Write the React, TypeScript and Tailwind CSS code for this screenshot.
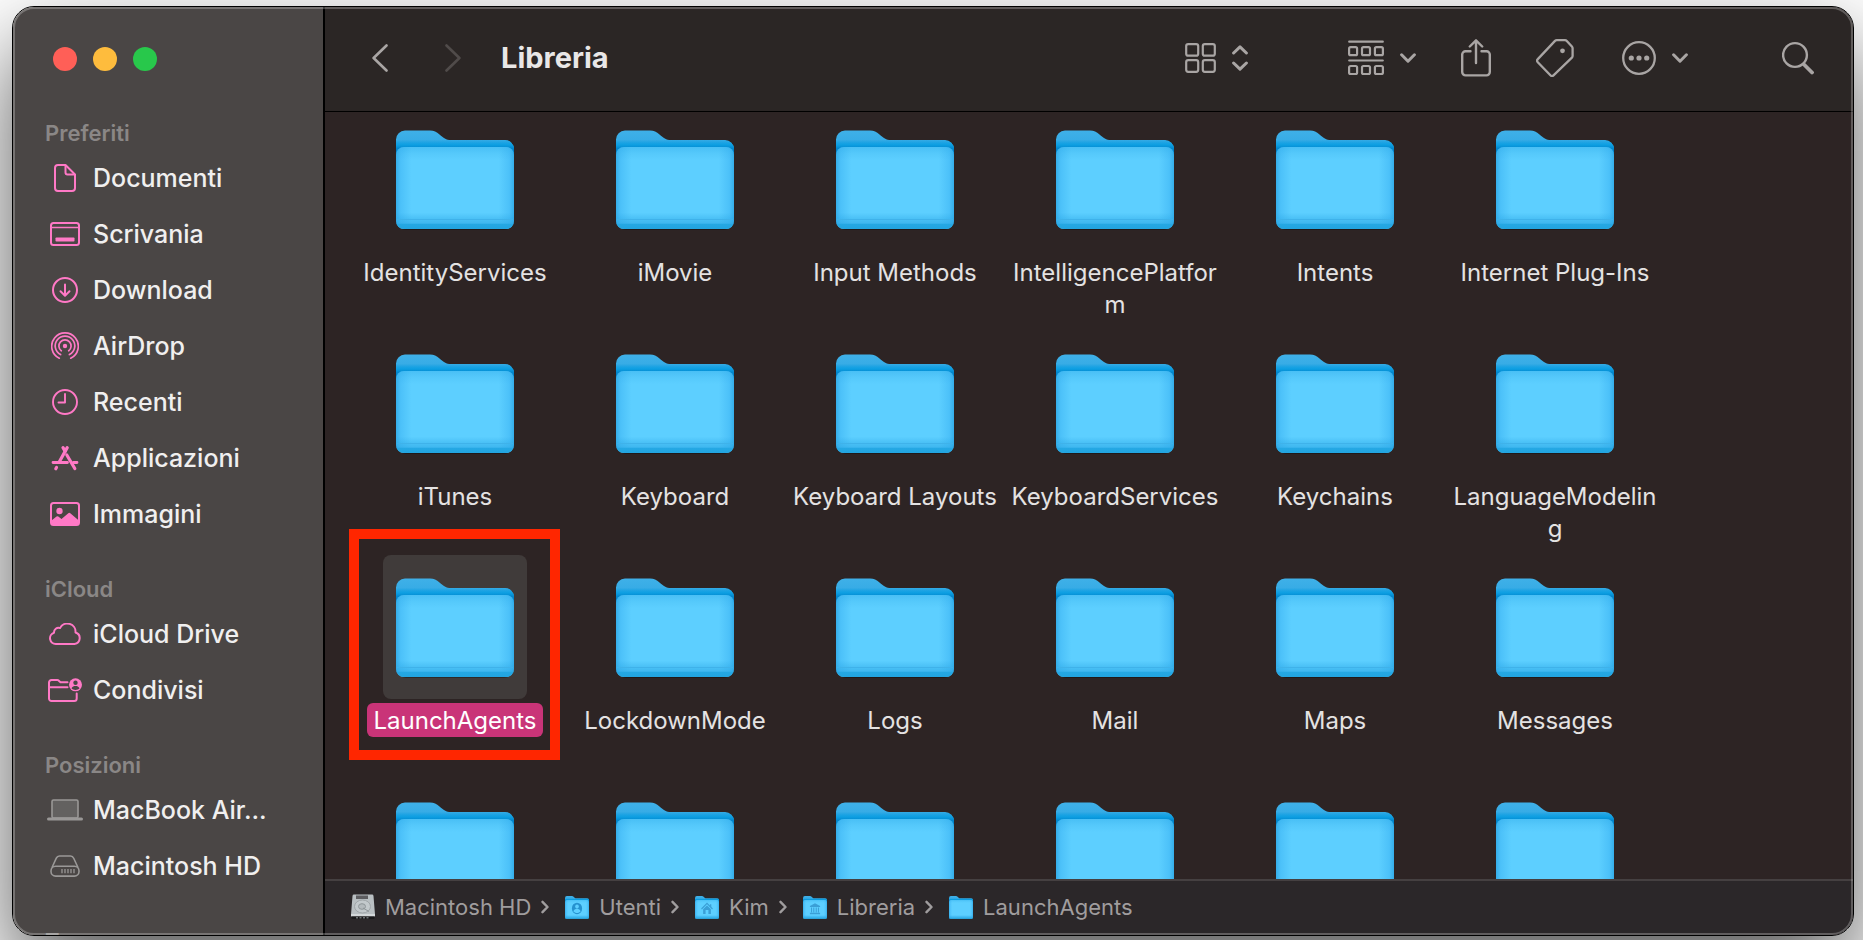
import React, { useState } from 'react';

interface FolderArtProps {
    className?: string;
    children?: React.ReactNode;
}

interface SidebarEntry {
    label: string;
    icon: React.ReactNode;
}

interface SidebarGroup {
    title: string;
    entries: SidebarEntry[];
}

/* ---------- Sidebar icons ---------- */

const DocumentIcon = () => (
    <svg width="22" height="28" viewBox="0 0 22 28" fill="none" stroke="currentColor" strokeWidth="2" strokeLinejoin="round">
        <path d="M4 1h7.5L21 10.5V24a3 3 0 0 1-3 3H4a3 3 0 0 1-3-3V4a3 3 0 0 1 3-3Z" />
        <path d="M11.5 1v7.5a2 2 0 0 0 2 2H21" />
    </svg>
);

const DesktopIcon = () => (
    <svg width="30" height="24" viewBox="0 0 30 24" fill="none" stroke="currentColor" strokeWidth="2">
        <rect x="1" y="1" width="28" height="22" rx="2.5" />
        <path d="M1 5.500h28" strokeWidth="1.6" />
        <rect x="5.500" y="15.500" width="19" height="4" rx="0.8" fill="currentColor" stroke="none" />
    </svg>
);

const DownloadIcon = () => (
    <svg width="26" height="26" viewBox="0 0 26 26" fill="none" stroke="currentColor" strokeWidth="2" strokeLinecap="round" strokeLinejoin="round">
        <circle cx="13" cy="13" r="12" />
        <path d="M13 7.500v11M8.500 14.300 13 18.700l4.500-4.400" />
    </svg>
);

const AirDropIcon = () => (
    <svg width="28" height="28" viewBox="0 0 28 28" fill="none" stroke="currentColor" strokeWidth="1.7" strokeLinecap="round">
        <path d="M8.300 26.200A13.300 13.300 0 1 1 19.700 26.200" />
        <path d="M9.600 22.600A9.800 9.800 0 1 1 18.400 22.600" />
        <path d="M10.300 18.800A6.100 6.100 0 1 1 17.700 18.800" />
        <circle cx="14" cy="14" r="2.200" fill="currentColor" stroke="none" />
    </svg>
);

const ClockIcon = () => (
    <svg width="26" height="26" viewBox="0 0 26 26" fill="none" stroke="currentColor" strokeWidth="1.9" strokeLinecap="round" strokeLinejoin="round">
        <circle cx="13" cy="13" r="12" />
        <path d="M13 5v8.500H6.500" />
    </svg>
);

const AppsIcon = () => (
    <svg width="28" height="26" viewBox="0 0 28 26" fill="none" stroke="currentColor" strokeWidth="3.200" strokeLinecap="round">
        <path d="M16.200 2.600 8.500 16.500" />
        <path d="M12 2.600l2.200 3.800M15.800 10l8 13.500" />
        <path d="M2 17.500h14.500M22.500 17.500H26" strokeWidth="2.800" />
        <path d="M5.500 22.500l-.7 1.200" />
    </svg>
);

const PictureIcon = () => (
    <svg width="30" height="24" viewBox="0 0 30 24" fill="none">
        <rect x="1" y="1" width="28" height="22" rx="2.500" stroke="currentColor" strokeWidth="2" />
        <circle cx="9.500" cy="9" r="3.200" fill="currentColor" />
        <path d="M1.500 18.500 6.500 14.500a1.500 1.500 0 0 1 1.800 0L11.500 17l6.800-5.800a1.600 1.600 0 0 1 2 0l8.200 7V21a2 2 0 0 1-2 2h-23a2 2 0 0 1-2-2Z" fill="currentColor" />
    </svg>
);

const CloudIcon = () => (
    <svg width="32" height="22" viewBox="0 0 32 22" fill="none" stroke="currentColor" strokeWidth="2" strokeLinejoin="round">
        <path d="M7 21a5.800 5.800 0 0 1-2-11.300 4.500 4.500 0 0 1 6-4.600A8.200 8.200 0 0 1 26.500 9.500 5.900 5.900 0 0 1 25.500 21Z" />
    </svg>
);

const SharedIcon = () => (
    <svg width="34" height="24" viewBox="0 0 34 24" fill="none" stroke="currentColor" strokeWidth="2" strokeLinecap="round" strokeLinejoin="round">
        <path d="M19.500 4.200H12.500l-2-1.800A1.800 1.800 0 0 0 9.300 2H3.500A2.500 2.500 0 0 0 1 4.500v16A2.500 2.500 0 0 0 3.500 23h22.700a2.500 2.500 0 0 0 2.500-2.500V15.500" />
        <path d="M1.500 9.200H19.500" />
        <circle cx="27.500" cy="6.800" r="6.500" fill="currentColor" stroke="none" />
        <circle cx="27.500" cy="4.800" r="2.200" fill="#4a4645" stroke="none" />
        <path d="M23.500 10.300c.8-1.700 2.300-2.300 4-2.300s3.200.6 4 2.300c-1 1.100-2.400 1.700-4 1.700s-3-.6-4-1.700Z" fill="#4a4645" stroke="none" />
    </svg>
);

const LaptopIcon = () => (
    <svg width="38" height="22" viewBox="0 0 38 22" fill="none">
        <rect x="6" y="1" width="26" height="18" rx="1.500" fill="#636160" stroke="#9a9897" strokeWidth="1.600" />
        <rect x="1" y="18.500" width="36" height="3" rx="1.500" fill="#9a9897" />
    </svg>
);

const DriveIcon = () => (
    <svg width="30" height="22" viewBox="0 0 30 22" fill="none" stroke="#9a9897" strokeWidth="1.600" strokeLinejoin="round">
        <path d="M2 12.500 6.300 3.200C7 1.600 8 1 9.500 1h11c1.500 0 2.500.6 3.200 2.200L28 12.500" />
        <rect x="1" y="11.300" width="28" height="9.800" rx="4.600" />
        <path d="M12 14v4.200M15 14v4.200M18 14v4.200M21 14v4.200M24 14v4.200" strokeWidth="1.300" />
    </svg>
);

/* ---------- Toolbar icons ---------- */

const BackIcon = () => (
    <svg width="16" height="28" viewBox="0 0 16 28" fill="none" stroke="currentColor" strokeWidth="2.600" strokeLinecap="round" strokeLinejoin="round">
        <path d="M14.500 1.500 1.600 14l12.900 12.500" />
    </svg>
);

const ForwardIcon = () => (
    <svg width="16" height="28" viewBox="0 0 16 28" fill="none" stroke="currentColor" strokeWidth="2.600" strokeLinecap="round" strokeLinejoin="round">
        <path d="M1.500 1.500 14.400 14 1.500 26.500" />
    </svg>
);

const GridIcon = () => (
    <svg width="31" height="30" viewBox="0 0 31 30" fill="none" stroke="currentColor" strokeWidth="2.200">
        <rect x="1.200" y="1.100" width="12" height="11.600" rx="2" />
        <rect x="17.800" y="1.100" width="12" height="11.600" rx="2" />
        <rect x="1.200" y="17.200" width="12" height="11.600" rx="2" />
        <rect x="17.800" y="17.200" width="12" height="11.600" rx="2" />
    </svg>
);

const UpDownIcon = () => (
    <svg width="16" height="26" viewBox="0 0 16 26" fill="none" stroke="currentColor" strokeWidth="3" strokeLinecap="round" strokeLinejoin="round">
        <path d="M1.600 8 8 1.800 14.400 8M1.600 18 8 24.200l6.400-6.200" />
    </svg>
);

const ChevronDownIcon = () => (
    <svg width="16" height="10" viewBox="0 0 16 10" fill="none" stroke="currentColor" strokeWidth="3" strokeLinecap="round" strokeLinejoin="round">
        <path d="M1.600 1.800 8 8.200l6.400-6.400" />
    </svg>
);

const GroupIcon = () => (
    <svg width="36" height="36" viewBox="0 0 36 36" fill="none" stroke="currentColor" strokeWidth="2.200" strokeLinecap="round">
        <path d="M1.200 1.700h33.600M1.200 20.500h33.600" strokeWidth="2.200" />
        <rect x="1.100" y="7.200" width="8" height="8" rx="1.500" />
        <rect x="14" y="7.200" width="8" height="8" rx="1.500" />
        <rect x="26.900" y="7.200" width="8" height="8" rx="1.500" />
        <rect x="1.100" y="26" width="8" height="8" rx="1.500" />
        <rect x="14" y="26" width="8" height="8" rx="1.500" />
        <rect x="26.900" y="26" width="8" height="8" rx="1.500" />
    </svg>
);

const ShareIcon = () => (
    <svg width="30" height="38" viewBox="0 0 30 38" fill="none" stroke="currentColor" strokeWidth="2.400" strokeLinecap="round" strokeLinejoin="round">
        <path d="M9.500 12.300H4.500a3.300 3.300 0 0 0-3.300 3.300v17.500a3.300 3.300 0 0 0 3.300 3.300h21a3.300 3.300 0 0 0 3.300-3.300V15.600a3.300 3.300 0 0 0-3.300-3.300h-5" />
        <path d="M15 24V1.500M8.800 7.500 15 1.300l6.200 6.200" />
    </svg>
);

const TagIcon = () => (
    <svg width="38" height="38" viewBox="0 0 38 38" fill="none" stroke="currentColor" strokeWidth="2.300" strokeLinejoin="round">
        <path d="M20.800 1.200H29a2.500 2.500 0 0 1 1.800.8l5.100 5.500a2.500 2.500 0 0 1 .7 1.700V17a2.500 2.500 0 0 1-.7 1.700L17.500 36.300a2.200 2.200 0 0 1-3.100 0L1.800 23.200a2.200 2.200 0 0 1 0-3.100L19 1.900a2.500 2.500 0 0 1 1.800-.7Z" />
        <circle cx="26.500" cy="11.800" r="2.400" fill="currentColor" stroke="none" />
    </svg>
);

const EllipsisIcon = () => (
    <svg width="34" height="34" viewBox="0 0 34 34" fill="none">
        <circle cx="17" cy="17" r="15.800" stroke="currentColor" strokeWidth="2.300" />
        <circle cx="9.300" cy="17" r="2.600" fill="currentColor" />
        <circle cx="17" cy="17" r="2.600" fill="currentColor" />
        <circle cx="24.700" cy="17" r="2.600" fill="currentColor" />
    </svg>
);

const SearchIcon = () => (
    <svg width="32" height="34" viewBox="0 0 32 34" fill="none" stroke="currentColor" strokeLinecap="round">
        <circle cx="13" cy="14" r="11.900" strokeWidth="2.400" />
        <path d="M22 23.500l8 8" strokeWidth="3.800" />
    </svg>
);

/* ---------- Folder artwork ---------- */

const FolderGradients = () => (
    <svg className="absolute" width="0" height="0" aria-hidden="true">
        <defs>
            <linearGradient id="folder-back" x1="0" y1="0" x2="0" y2="1">
                <stop offset="0" stopColor="#3fb0e8" />
                <stop offset="0.15" stopColor="#38ace6" />
                <stop offset="0.3" stopColor="#209fde" />
                <stop offset="1" stopColor="#1a9fdf" />
            </linearGradient>
            <linearGradient id="folder-tab" x1="0" y1="0" x2="0" y2="1">
                <stop offset="0" stopColor="#0a9fe3" stopOpacity="0" />
                <stop offset="0.3" stopColor="#0a9fe3" stopOpacity="0.9" />
                <stop offset="0.55" stopColor="#0084cb" />
                <stop offset="1" stopColor="#007fc4" />
            </linearGradient>
            <linearGradient id="folder-front" x1="0" y1="0" x2="1" y2="0">
                <stop offset="0" stopColor="#35aeea" />
                <stop offset="0.04" stopColor="#4cc1f9" />
                <stop offset="0.13" stopColor="#5dcfff" />
                <stop offset="0.87" stopColor="#5dcfff" />
                <stop offset="0.96" stopColor="#4cc1f9" />
                <stop offset="1" stopColor="#35aeea" />
            </linearGradient>
            <linearGradient id="folder-shade" x1="0" y1="0" x2="0" y2="1">
                <stop offset="0" stopColor="#2ba8e6" stopOpacity="0.4" />
                <stop offset="0.08" stopColor="#2ba8e6" stopOpacity="0.15" />
                <stop offset="0.16" stopColor="#2ba8e6" stopOpacity="0" />
                <stop offset="0.8" stopColor="#2ba8e6" stopOpacity="0" />
                <stop offset="0.87" stopColor="#2ba8e6" stopOpacity="0.35" />
                <stop offset="0.93" stopColor="#2ba8e6" stopOpacity="0.6" />
                <stop offset="0.94" stopColor="#25a8e4" stopOpacity="1" />
                <stop offset="1" stopColor="#22a4e0" stopOpacity="1" />
            </linearGradient>
        </defs>
    </svg>
);

const FolderArt: React.FC<FolderArtProps> = ({ className, children }) => (
    <svg className={className} viewBox="0 0 118 100" preserveAspectRatio="none" fill="none" aria-hidden="true">
        <rect x="1" y="20" width="116" height="80" rx="9" fill="#000" opacity="0.3" />
        <path d="M0 9.500A9 9 0 0 1 9 .5h25c4 0 6.500 1.500 9.500 4 4 3.500 6.500 5.500 11.500 5.500h54a9 9 0 0 1 9 9V60H0Z" fill="url(#folder-back)" />
        <path d="M0 10h109a9 9 0 0 1 9 9V26H0Z" fill="url(#folder-tab)" />
        <rect x="0" y="17" width="118" height="82" rx="8" fill="url(#folder-front)" />
        <rect x="0" y="17" width="118" height="82" rx="8" fill="url(#folder-shade)" />
        <path d="M1 89.500h116" stroke="#3fb2ea" strokeWidth="1" />
        {children}
    </svg>
);

const HardDiskArt = () => (
    <svg width="24" height="26" viewBox="0 0 24 26" aria-hidden="true">
        <path d="M3 .5h18a1.500 1.500 0 0 1 1.500 1.400L24 20.500H0L1.500 1.900A1.500 1.500 0 0 1 3 .5Z" fill="#b9bfc2" />
        <rect x="5" y="1.500" width="12" height="3.500" fill="#5d5d60" />
        <ellipse cx="11.500" cy="12.500" rx="8" ry="6.500" fill="#c3c9cc" stroke="#a0a6a9" strokeWidth="1" />
        <ellipse cx="11" cy="12.500" rx="3.500" ry="2.800" fill="#b4babd" stroke="#8e9598" strokeWidth="1" />
        <path d="M12 14l6 3.500" stroke="#8e9598" strokeWidth="1" />
        <rect x="0" y="20" width="24" height="2.500" fill="#d4d8da" />
        <path d="M.5 22.500h23V24a1 1 0 0 1-1 1h-21a1 1 0 0 1-1-1Z" fill="#19191a" />
        <path d="M5 23.700h14" stroke="#6f7274" strokeWidth="1.500" strokeDasharray="2 1.500" />
    </svg>
);

const CrumbChevron = () => (
    <svg width="8" height="14" viewBox="0 0 8 14" fill="none" stroke="currentColor" strokeWidth="2.400" strokeLinecap="round" strokeLinejoin="round" aria-hidden="true">
        <path d="M1.500 1.800 6.500 7l-5 5.200" />
    </svg>
);

/* ---------- Data ---------- */

const groups: SidebarGroup[] = [
    {
        title: 'Preferiti',
        entries: [
            { label: 'Documenti', icon: <DocumentIcon /> },
            { label: 'Scrivania', icon: <DesktopIcon /> },
            { label: 'Download', icon: <DownloadIcon /> },
            { label: 'AirDrop', icon: <AirDropIcon /> },
            { label: 'Recenti', icon: <ClockIcon /> },
            { label: 'Applicazioni', icon: <AppsIcon /> },
            { label: 'Immagini', icon: <PictureIcon /> },
        ],
    },
    {
        title: 'iCloud',
        entries: [
            { label: 'iCloud Drive', icon: <CloudIcon /> },
            { label: 'Condivisi', icon: <SharedIcon /> },
        ],
    },
    {
        title: 'Posizioni',
        entries: [
            { label: 'MacBook Air...', icon: <LaptopIcon /> },
            { label: 'Macintosh HD', icon: <DriveIcon /> },
        ],
    },
    { title: 'Tag', entries: [] },
];

const folders = [
    'IdentityServices', 'iMovie', 'Input Methods', 'IntelligencePlatform', 'Intents', 'Internet Plug-Ins',
    'iTunes', 'Keyboard', 'Keyboard Layouts', 'KeyboardServices', 'Keychains', 'LanguageModeling',
    'LaunchAgents', 'LockdownMode', 'Logs', 'Mail', 'Maps', 'Messages',
    '', '', '', '', '', '',
];

const crumbs = [
    { label: 'Macintosh HD', icon: <HardDiskArt /> },
    {
        label: 'Utenti',
        icon: (
            <FolderArt className="h-[23px] w-6">
                <circle cx="59" cy="54" r="25" fill="#2592cf" />
                <circle cx="59" cy="46" r="9" fill="#5dcfff" />
                <path d="M41 66c3-8 9-10 18-10s15 2 18 10c-5 5-11 8-18 8s-13-3-18-8Z" fill="#5dcfff" />
            </FolderArt>
        ),
    },
    {
        label: 'Kim',
        icon: (
            <FolderArt className="h-[23px] w-6">
                <path d="M32 57 59 32l27 25" stroke="#3a9fd6" strokeWidth="6" />
                <path d="M40 58 59 41l19 17v20H66V61H52v17H40Z" fill="#3a9fd6" />
                <path d="M77 36v12" stroke="#3a9fd6" strokeWidth="6" />
            </FolderArt>
        ),
    },
    {
        label: 'Libreria',
        icon: (
            <FolderArt className="h-[23px] w-6">
                <path d="M34 44 59 31l25 13v4H34ZM34 73h50v6H34Z" fill="#3a9fd6" />
                <path d="M42 50v22M53 50v22M65 50v22M76 50v22" stroke="#3a9fd6" strokeWidth="5" />
            </FolderArt>
        ),
    },
    { label: 'LaunchAgents', icon: <FolderArt className="h-[23px] w-6" /> },
];

/* ---------- Sections ---------- */

const Sidebar = () => (
    <aside className="w-[312px] shrink-0 overflow-hidden border-r-2 border-black bg-[#4a4645]">
        <div className="flex gap-4 pl-10 pt-10">
            <button aria-label="Chiudi" className="h-6 w-6 rounded-full bg-[#ff5f57]" />
            <button aria-label="Riduci" className="h-6 w-6 rounded-full bg-[#febc3d]" />
            <button aria-label="Ingrandisci" className="h-6 w-6 rounded-full bg-[#28c84b]" />
        </div>
        <nav className="flex flex-col gap-[30px] pl-8 pt-[45px]">
            {groups.map(group => (
                <section key={group.title}>
                    <h2 className="h-[34px] text-[22px] font-semibold leading-[34px] text-[#8a8786]">{group.title}</h2>
                    {group.entries.map(entry => (
                        <a
                            key={entry.label}
                            href="#"
                            className="flex h-14 items-center gap-2 whitespace-nowrap text-[25px] font-medium text-[#f0efef]"
                        >
                            <span className="flex w-10 shrink-0 justify-center text-[#ff79c6]">{entry.icon}</span>
                            <span className="pt-0.5">{entry.label}</span>
                        </a>
                    ))}
                </section>
            ))}
        </nav>
    </aside>
);

const Toolbar = () => (
    <header className="flex h-[105px] shrink-0 items-center border-b border-black bg-[#2b2625] pb-0.5 pl-[47px] pr-[39px] text-[#a9a5a4]">
        <button aria-label="Indietro"><BackIcon /></button>
        <button aria-label="Avanti" disabled className="ml-[57px] text-[#504b4a]"><ForwardIcon /></button>
        <h1 className="ml-10 text-[29px] font-bold text-[#e9e7e7]">Libreria</h1>
        <div className="ml-auto flex items-center">
            <button aria-label="Vista" className="flex items-center gap-4"><GridIcon /><UpDownIcon /></button>
            <button aria-label="Raggruppa" className="ml-[100px] flex items-center gap-4"><GroupIcon /><ChevronDownIcon /></button>
            <button aria-label="Condividi" className="ml-[45px]"><ShareIcon /></button>
            <button aria-label="Tag" className="ml-[45px]"><TagIcon /></button>
            <button aria-label="Altro" className="ml-12 flex items-center gap-4"><EllipsisIcon /><ChevronDownIcon /></button>
            <button aria-label="Cerca" className="ml-[94px]"><SearchIcon /></button>
        </div>
    </header>
);

interface FolderCellProps {
    name: string;
    selected: boolean;
    highlighted: boolean;
    onSelect: () => void;
}

const FolderCell: React.FC<FolderCellProps> = ({ name, selected, highlighted, onSelect }) => (
    <button onClick={onSelect} className="relative flex h-56 flex-col items-center gap-1">
        <span className={`flex h-36 w-36 shrink-0 items-center justify-center rounded-lg pt-0.5 ${selected ? 'bg-[#403b3a]' : ''}`}>
            <FolderArt className="h-[100px] w-[118px]" />
        </span>
        {name && (
            <span
                className={`max-w-[220px] rounded-md px-[6px] pt-0.5 text-[24px] leading-8 break-all ${selected ? 'bg-[#c93478] text-white' : 'text-[#e4e2e2]'}`}
            >
                {name}
            </span>
        )}
        {highlighted && (
            <span className="pointer-events-none absolute -top-[26px] bottom-[19px] left-1 right-[5px] border-[10px] border-[#ff2600]" />
        )}
    </button>
);

const PathBar = () => (
    <footer className="flex h-14 shrink-0 items-center gap-4 border-t-2 border-[#454041] bg-[#2b2729] pb-0.5 pl-[26px] text-[22px] text-[#a09d9e]">
        {crumbs.map((crumb, i) => (
            <div key={crumb.label} className="flex items-center gap-[10px]">
                {crumb.icon}
                <a href="#">{crumb.label}</a>
                {i < crumbs.length - 1 && <CrumbChevron />}
            </div>
        ))}
    </footer>
);

const App: React.FC = () => {
    const [selected, setSelected] = useState(folders.indexOf('LaunchAgents'));

    return (
        <div className="h-screen overflow-hidden bg-white pt-[6px] pr-[9px] pb-1 pl-3 font-['Inter',sans-serif]">
            <FolderGradients />
            <div className="relative flex h-full overflow-hidden rounded-[22px] border border-black shadow-[0_40px_90px_rgba(0,0,0,0.65)]">
                <Sidebar />
                <main className="flex min-w-0 flex-1 flex-col bg-[#2d2424]">
                    <Toolbar />
                    <div className="min-h-0 flex-1 overflow-hidden pl-5">
                        <div className="-mt-[5px] grid grid-cols-[repeat(auto-fill,220px)]">
                            {folders.map((name, i) => (
                                <FolderCell
                                    key={i}
                                    name={name}
                                    selected={i === selected}
                                    highlighted={name === 'LaunchAgents'}
                                    onSelect={() => setSelected(i)}
                                />
                            ))}
                        </div>
                    </div>
                    <PathBar />
                </main>
                {/* Light rim just inside the window edge */}
                <div className="pointer-events-none absolute inset-0 rounded-[21px] border-2 border-white/25" />
            </div>
        </div>
    );
};

export default App;
